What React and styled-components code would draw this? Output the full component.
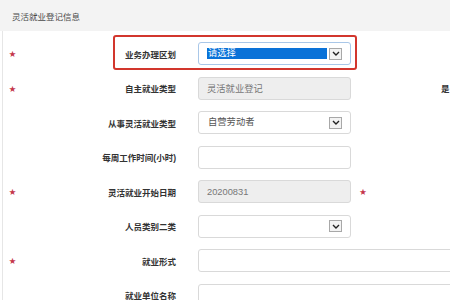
import React from "react";
import styled, { createGlobalStyle } from "styled-components";

const GlobalStyle = createGlobalStyle`
  html, body {
    margin: 0;
    padding: 0;
    background: #fff;
    overflow: hidden;
  }
  body {
    font-family: "Liberation Sans", "Noto Sans CJK SC", sans-serif;
  }
`;

const Page = styled.div`
  width: 450px;
  height: 300px;
  overflow: hidden;
`;

const Header = styled.div`
  height: 31px;
  display: flex;
  align-items: center;
  padding-left: 12px;
  background: #f3f3f3;
  color: #4a4a4a;
  font-size: 8.5px;
`;

const Form = styled.div`
  margin-left: 2px;
  border-left: 1px solid #e6e6e6;
  padding-top: 11px;
  height: 300px;
  display: flex;
  flex-direction: column;
  gap: 11.5px;
`;

const Row = styled.div`
  position: relative;
  display: grid;
  grid-template-columns: 19px 176px 153px 24px 1fr;
  align-items: center;
  height: 23px;
`;

const Star = styled.span`
  justify-self: center;
  color: #c4354a;
  font-size: 7px;
  line-height: 1;
`;

const Label = styled.div`
  grid-column: 2;
  text-align: right;
  padding-right: 22px;
  font-size: 8.5px;
  font-weight: bold;
  color: #333;
  white-space: nowrap;
`;

const SideLabel = styled(Label)`
  grid-column: 5;
  text-align: left;
  padding: 0 0 0 66px;
`;

const Field = styled.div`
  grid-column: ${(p) => (p.$wide ? "3 / -1" : "3")};
  width: ${(p) => (p.$wide ? "300px" : "auto")};
  height: 23px;
  box-sizing: border-box;
  display: flex;
  align-items: center;
  padding: 0 8px;
  border: 1px solid ${(p) => (p.$focus ? "#a9c7e8" : "#d9d9d9")};
  border-radius: 3px;
  background: ${(p) => (p.$disabled ? "#eeeeee" : "#fff")};
  color: ${(p) => (p.$disabled ? "#777" : "#555")};
  font-size: 9.3px;
`;

const Value = styled.span`
  flex: 1;
  height: 11px;
  line-height: 11px;
  padding-left: 1px;
  background: ${(p) => (p.$selected ? "#0a72d8" : "transparent")};
  color: ${(p) => (p.$selected ? "#fff" : "inherit")};
  margin-right: 2px;
`;

const ArrowBox = styled.span`
  width: 13px;
  height: 12px;
  box-sizing: border-box;
  border: 1px solid #a8a8a8;
  background: #f3f3f3;
  display: flex;
  align-items: center;
  justify-content: center;
`;

const Highlight = styled.div`
  position: absolute;
  left: 110px;
  top: -7px;
  width: 244px;
  height: 35px;
  box-sizing: border-box;
  border: 2px solid #d2362d;
  border-radius: 3px;
  pointer-events: none;
`;

const Arrow = () => (
  <ArrowBox>
    <svg width="8" height="5" viewBox="0 0 8 5">
      <path d="M1 1 L4 4 L7 1" fill="none" stroke="#222" strokeWidth="1.4" />
    </svg>
  </ArrowBox>
);

const Select = ({ value, selected, focus }) => (
  <Field $focus={focus}>
    <Value $selected={selected}>{value}</Value>
    <Arrow />
  </Field>
);

const App = () => (
  <Page>
    <GlobalStyle />
    <Header>灵活就业登记信息</Header>
    <Form>
      <Row>
        <Star>★</Star>
        <Label>业务办理区划</Label>
        <Select value="请选择" selected focus />
        <Highlight />
      </Row>
      <Row>
        <Star>★</Star>
        <Label>自主就业类型</Label>
        <Field $disabled>灵活就业登记</Field>
        <span />
        <SideLabel>是</SideLabel>
      </Row>
      <Row>
        <span />
        <Label>从事灵活就业类型</Label>
        <Select value="自营劳动者" />
      </Row>
      <Row>
        <span />
        <Label>每周工作时间(小时)</Label>
        <Field />
      </Row>
      <Row>
        <Star>★</Star>
        <Label>灵活就业开始日期</Label>
        <Field $disabled>20200831</Field>
        <Star>★</Star>
      </Row>
      <Row>
        <span />
        <Label>人员类别二类</Label>
        <Select value="" />
      </Row>
      <Row>
        <Star>★</Star>
        <Label>就业形式</Label>
        <Field $wide />
      </Row>
      <Row>
        <span />
        <Label>就业单位名称</Label>
        <Field $wide />
      </Row>
    </Form>
  </Page>
);

export default App;
